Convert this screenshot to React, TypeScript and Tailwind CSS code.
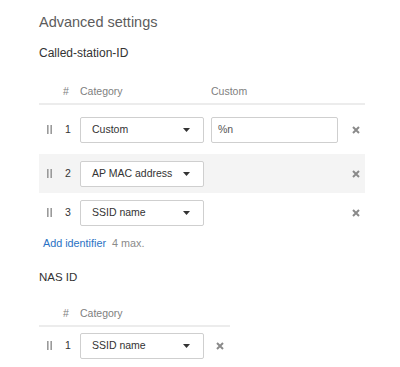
import React from "react";

const Handle = () => (
  <div className="w-[18px] flex justify-start">
    <svg width="6" height="9" viewBox="0 0 6 9">
      <rect x="0" y="0" width="1.6" height="9" fill="#9a9a9a" />
      <rect x="3.4" y="0" width="1.6" height="9" fill="#9a9a9a" />
    </svg>
  </div>
);

const XIcon = () => (
  <svg width="8" height="8" viewBox="0 0 8 8">
    <path d="M1 1 L7 7 M7 1 L1 7" stroke="#8a8a8a" strokeWidth="2" strokeLinecap="butt" />
  </svg>
);

const Select = ({ label }: { label: string }) => (
  <div className="w-[124px] h-[26px] border border-[#cfcfcf] rounded-[2px] bg-white flex items-center justify-between pl-[11px] pr-[13px] text-[10.5px] text-[#333] whitespace-nowrap">
    <span>{label}</span>
    <svg width="7" height="4" viewBox="0 0 7 4">
      <path d="M0 0 L7 0 L3.5 4 Z" fill="#333" />
    </svg>
  </div>
);

const Row = ({
  n,
  label,
  custom,
  hasInput,
  gray,
  h,
  xLeft,
}: {
  n: number;
  label: string;
  custom?: string;
  hasInput?: boolean;
  gray?: boolean;
  h: string;
  xLeft?: boolean;
}) => (
  <div className={`flex items-center ${h} ${gray ? "bg-[#f4f4f4]" : ""}`}>
    <div className="w-[8px]" />
    <Handle />
    <div className="w-[15px] text-[10.5px] text-[#333]">{n}</div>
    <Select label={label} />
    {xLeft ? (
      <div className="ml-[12px] flex items-center">
        <XIcon />
      </div>
    ) : (
      <>
        <div className="w-[7px]" />
        {hasInput ? (
          <div className="w-[127px] h-[26px] border border-[#cfcfcf] rounded-[2px] bg-white flex items-center pl-[6px] text-[10.5px] text-[#555]">
            {custom}
          </div>
        ) : (
          <div className="w-[127px]" />
        )}
        <div className="ml-[14px] flex items-center">
          <XIcon />
        </div>
      </>
    )}
  </div>
);

export default function App() {
  return (
    <div className="w-[400px] h-[367px] bg-white pl-[39px] overflow-hidden font-['Liberation_Sans',Arial,sans-serif]">
      <div className="pt-[12px] h-[33px] text-[14.5px] leading-[20px] text-[#5c5c5c]">Advanced settings</div>
      <div className="mt-[12px] h-[16px] leading-[16px] text-[12px] text-[#333]">Called-station-ID</div>
      <div className="mt-[22px] w-[326px]">
        <div className="flex items-center h-[18px] text-[10.5px] text-[#808080] border-b-2 border-[#ececec] pb-[2px] box-content">
          <div className="w-[24px]" />
          <div className="w-[17px]">#</div>
          <div className="w-[131px]">Category</div>
          <div>Custom</div>
        </div>
        <Row n={1} label="Custom" custom="%n" hasInput h="h-[49px]" />
        <Row n={2} label="AP MAC address" gray h="h-[39px]" />
        <Row n={3} label="SSID name" h="h-[39px]" />
      </div>
      <div className="mt-[3px] pl-[4px] h-[16px] leading-[16px] text-[10.8px]">
        <span className="text-[#2a72c4]">Add identifier</span>
        <span className="text-[#8a8a8a] ml-[6px]">4 max.</span>
      </div>
      <div className="mt-[18px] h-[16px] leading-[16px] text-[11.5px] text-[#333]">NAS ID</div>
      <div className="mt-[20px] w-[191px]">
        <div className="flex items-center h-[18px] text-[10.5px] text-[#808080] border-b-2 border-[#ececec] pb-[2px] box-content">
          <div className="w-[24px]" />
          <div className="w-[17px]">#</div>
          <div>Category</div>
        </div>
        <div className="h-[5px]" />
        <Row n={1} label="SSID name" h="h-[27px]" xLeft />
      </div>
    </div>
  );
}
